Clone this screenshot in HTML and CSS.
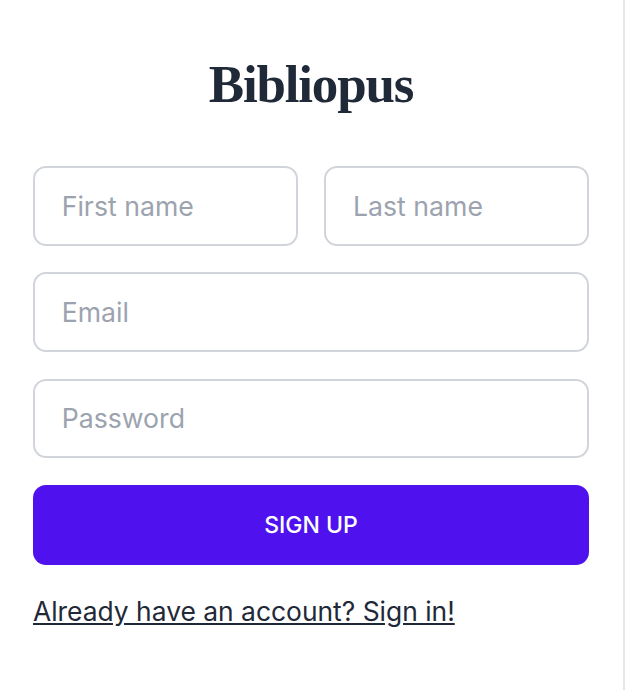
FILE: index.html
```html
<!DOCTYPE html>
<html lang="en">
<head>
    <meta charset="UTF-8">
    <meta name="viewport" content="width=device-width, initial-scale=1.0">
    <title>Bibliopus</title>
    <link rel="stylesheet" href="styles.css">
</head>
<body>
    <div class="signup-panel">
        <h1 class="logo">Bibliopus</h1>
        <form class="signup-form">
            <div class="name-row">
                <input type="text" class="field" placeholder="First name">
                <input type="text" class="field" placeholder="Last name">
            </div>
            <input type="email" class="field" placeholder="Email">
            <input type="password" class="field" placeholder="Password">
            <button type="submit" class="btn">SIGN UP</button>
        </form>
        <a href="#" class="signin-link">Already have an account? Sign in!</a>
    </div>
</body>
</html>
```

FILE: styles.css
```css
* {
    box-sizing: border-box;
}

body {
    font-family: Inter, sans-serif;
    background-color: #ffffff;
    margin: 0;
    padding: 0;
}

.signup-panel {
    width: 625px;
    height: 690px;
    padding: 53px 34px 0 33px;
    border-right: 2px solid #e5e7eb;
}

.logo {
    margin: 0 0 51px;
    height: 62px;
    font-family: "Liberation Serif", serif;
    font-size: 53px;
    font-weight: 700;
    line-height: 62px;
    letter-spacing: -1.2px;
    text-align: center;
    color: #1f2937;
}

.signup-form {
    display: flex;
    flex-direction: column;
    gap: 26.67px;
}

.name-row {
    display: grid;
    grid-template-columns: 1fr 1fr;
    gap: 26.67px;
}

.field {
    width: 100%;
    height: 79.67px;
    padding: 0 26.67px;
    font-family: Inter, sans-serif;
    font-size: 26.67px;
    color: #1f2937;
    background-color: #ffffff;
    border: 2px solid #d1d5db;
    border-radius: 13px;
    outline: none;
}

.field::placeholder {
    color: #9ca3af;
    opacity: 1;
}

.btn {
    height: 79.67px;
    font-family: Inter, sans-serif;
    font-size: 23px;
    font-weight: 500;
    color: #ffffff;
    background-color: #4f12ef;
    border: none;
    border-radius: 13px;
    cursor: pointer;
}

.signin-link {
    display: inline-block;
    margin-top: 27px;
    font-size: 26.4px;
    line-height: 38px;
    color: #1f2937;
}
```
